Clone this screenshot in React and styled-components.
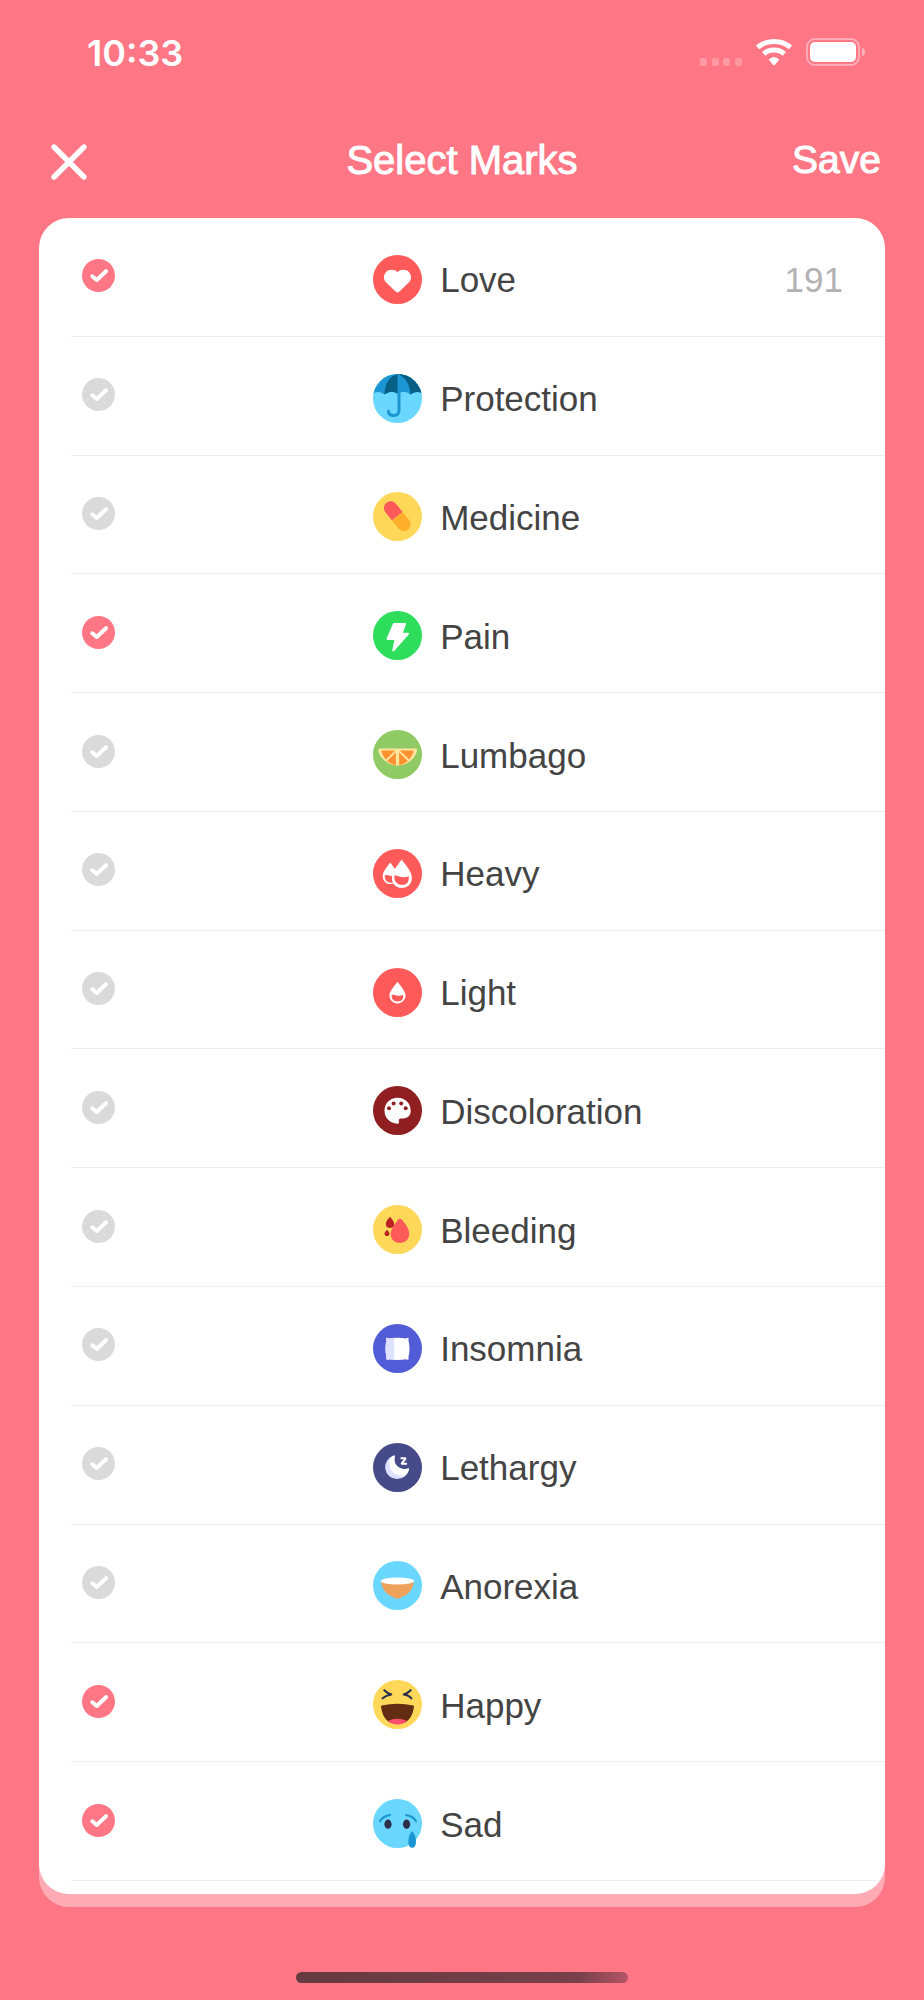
import React, { useState } from "react";
import styled, { createGlobalStyle, ThemeProvider } from "styled-components";

const theme = {
  pink: "#ff7685",
  pinkLight: "#ffabb5",
  white: "#ffffff",
  off: "#dadada",
  line: "#ededee",
  text: "#444444",
  muted: "#b2b2b2"
};

const GlobalStyle = createGlobalStyle`
  * {
    box-sizing: border-box;
  }

  body {
    margin: 0;
    background: ${theme.pink};
    font-family: "Liberation Sans", Arial, sans-serif;
  }
`;

const Screen = styled.div`
  min-height: 100vh;
  display: flex;
  flex-direction: column;
  background: ${({ theme }) => theme.pink};
  color: ${({ theme }) => theme.white};
`;

const StatusBar = styled.div`
  height: 106px;
  padding: 0 59px 0 87px;
  display: flex;
  justify-content: space-between;
  align-items: center;
`;

const Time = styled.time`
  font-family: Inter, "Liberation Sans", sans-serif;
  font-size: 36px;
  font-weight: 600;
  line-height: 44px;
`;

const StatusIcons = styled.div`
  display: flex;
  align-items: center;
`;

const Header = styled.header`
  height: 112px;
  padding: 0 43px 4px;
  display: grid;
  grid-template-columns: 1fr auto 1fr;
  align-items: center;
`;

const Title = styled.h1`
  margin: 0;
  font-size: 40px;
  font-weight: 400;
  line-height: 48px;
  -webkit-text-stroke: 1px currentColor;
`;

const HeaderButton = styled.button`
  justify-self: ${({ $end }) => ($end ? "end" : "start")};
  display: flex;
  padding: ${({ $end }) => ($end ? "0" : "4px 7px 0")};
  border: 0;
  background: none;
  color: inherit;
  font: inherit;
  font-size: 39px;
  line-height: 48px;
  -webkit-text-stroke: 1px currentColor;
  cursor: pointer;
`;

const Card = styled.main`
  flex: 1;
  margin: 0 39px 106px;
  padding: 0 0 13px 32px;
  display: flex;
  overflow: hidden;
  border-radius: 30px;
  background: ${({ theme }) => theme.white};
  box-shadow: 0 13px 0 ${({ theme }) => theme.pinkLight};
`;

const List = styled.ul`
  flex: 1;
  margin: 0;
  padding: 0;
  display: flex;
  flex-direction: column;
  list-style: none;
`;

const Item = styled.li`
  flex: 1 0 80px;
  display: flex;
  border-bottom: 1px solid ${({ theme }) => theme.line};
`;

const Row = styled.label`
  flex: 1;
  padding: 5px 42px 0 11px;
  display: grid;
  grid-template-columns: minmax(60px, 38%) auto 1fr auto;
  align-items: center;
  color: ${({ theme }) => theme.text};
  font-size: 35px;
  line-height: 44px;
  cursor: pointer;
`;

const Check = styled.span`
  width: 33px;
  height: 33px;
  margin-bottom: 7px;
  display: grid;

  > * {
    grid-area: 1 / 1;
  }

  svg {
    pointer-events: none;
  }
`;

const CheckInput = styled.input`
  appearance: none;
  width: 33px;
  height: 33px;
  margin: 0;
  border-radius: 50%;
  background: ${({ theme }) => theme.off};
  cursor: pointer;

  &:checked {
    background: ${({ theme }) => theme.pink};
  }
`;

const Mark = styled.svg`
  display: block;
  width: 49px;
  height: 49px;
  margin-left: 2px;
`;

const Label = styled.span`
  padding: 2px 0 0 18px;
`;

const Count = styled.span`
  padding-top: 2px;
  color: ${({ theme }) => theme.muted};
`;

const HomeBar = styled.div`
  width: 36%;
  height: 11px;
  margin: -28px auto 17px;
  border-radius: 6px;
  background: linear-gradient(100deg, #653a41 0%, #77404a 85%, #b65665 100%);
`;

/* every mark is drawn on a 49 x 49 circle */
const marks = [
  {
    id: "love",
    label: "Love",
    count: 191,
    checked: true,
    bg: "#ff5a5a",
    art: (
      <path
        fill="#fff"
        d="M24.5 17.2C21.5 14 15.8 14.2 12.9 17.2C10.2 20.3 10.3 24.6 13 27.2L22.6 36.6C23.8 37.8 25.2 37.8 26.4 36.6L36 27.2C38.7 24.6 38.8 20.3 36.1 17.2C33.2 14.2 27.5 14 24.5 17.2Z"
      />
    )
  },
  {
    id: "protection",
    label: "Protection",
    bg: "#69d7ff",
    art: (
      <>
        <path
          fill="#1c96d2"
          d="M0 20Q2 0 24.5 0Q47 0 49 20L48 19Q43 16.5 37.5 20.5Q31 15.5 24.5 20Q18 15.5 11.5 20.5Q6 16.5 1 19Z"
        />
        <path
          fill="#075f86"
          d="M24.5 0Q12 4 11.5 20.5Q18 15.5 24.5 19.5ZM24.5 0Q36 4 37.5 20.5Q43 16.5 49 19V0Z"
        />
        <path
          fill="none"
          stroke="#1c96d2"
          strokeWidth="3"
          strokeLinecap="round"
          d="M26 18V36.5Q26 41.5 20.7 41.5Q15.5 41.5 15.5 37"
        />
      </>
    )
  },
  {
    id: "medicine",
    label: "Medicine",
    bg: "#ffd85a",
    art: (
      <g transform="rotate(-39 24.3 24.2)">
        <path fill="#ff5a5a" d="M17.5 24.2V13.7A6.8 6.8 0 0 1 31.1 13.7V24.2Z" />
        <path fill="#ffaf2c" d="M17.5 24.2V34.7A6.8 6.8 0 0 0 31.1 34.7V24.2Z" />
      </g>
    )
  },
  {
    id: "pain",
    label: "Pain",
    checked: true,
    bg: "#2edd5b",
    art: (
      <path
        fill="#fff"
        d="M20.8 12H32.4Q33.3 12 33 12.9L30 21.7H35.3Q36.8 21.9 35.9 23.2L21.2 40Q19.3 41.2 19.3 39.2L21.3 29H14.4Q13.2 28.8 13.6 27.6L20 12.6Q20.2 12 20.8 12Z"
      />
    )
  },
  {
    id: "lumbago",
    label: "Lumbago",
    bg: "#8fca65",
    art: (
      <>
        <path fill="#ffe6a0" d="M6.3 18.6H43.2Q44.2 18.6 44.1 19.6A19.6 18 0 0 1 5.2 19.6Q5.2 18.6 6.3 18.6Z" />
        <path
          fill="#ff922e"
          d="M8.3 20.6H22.2L12.8 29.6Q9.3 26 8.3 20.6ZM40.7 20.6H26.8L36.2 29.6Q39.7 26 40.7 20.6ZM22.9 22.2V35.2Q18 34.4 14.2 31.1ZM26.1 22.2V35.2Q31 34.4 34.8 31.1Z"
        />
      </>
    )
  },
  {
    id: "heavy",
    label: "Heavy",
    bg: "#ff5a5a",
    art: (
      <>
        <path
          fill="#fff"
          d="M17.2 13.4C15 16.3 9.7 22.5 9.7 27.2C9.7 31.5 13 35 17.2 35C21.4 35 24.7 31.5 24.7 27.2C24.7 22.5 19.4 16.3 17.2 13.4Z"
        />
        <path fill="#ff5a5a" d="M11.6 26.6C14.5 24.8 17 27.8 20.4 26.6Q20 31 21.4 33.3Q12 35.4 11.6 26.6Z" />
        <path
          fill="#fff"
          d="M28.6 10.6C25.6 14.8 18.9 22.5 18.9 28.8C18.9 34.8 23 39.1 28.8 39.1C34.6 39.1 38.9 34.8 38.9 28.8C38.9 22.5 31.6 14.8 28.6 10.6Z"
        />
        <path fill="#ff5a5a" d="M21.2 26.6C25.5 25.7 28.5 30.5 35.8 26.9Q36.6 35.8 28.8 36Q21 35.8 21.2 26.6Z" />
      </>
    )
  },
  {
    id: "light",
    label: "Light",
    bg: "#ff5a5a",
    art: (
      <>
        <path
          fill="#fff"
          d="M24.5 13.7C22 17.2 16.4 23.2 16.4 27.6C16.4 32 20 35.5 24.5 35.5C29 35.5 32.6 32 32.6 27.6C32.6 23.2 27 17.2 24.5 13.7Z"
        />
        <path fill="#ff5a5a" d="M18.5 27C22 25.6 24.5 29.5 30.3 26.7Q30.8 33.3 24.5 33.4Q18.5 33.2 18.5 27Z" />
      </>
    )
  },
  {
    id: "discoloration",
    label: "Discoloration",
    bg: "#8f1f20",
    art: (
      <>
        <path
          fill="#fff"
          d="M24.6 11.8C17 11.8 11.5 17.3 11.5 24.6C11.5 32 17 37.7 24.7 37.7Q26 37.7 25.9 36.5L25.8 34Q26 32.4 27.8 32.5C33 33 37.7 31 37.7 24.8C37.7 17.3 32.2 11.8 24.6 11.8Z"
        />
        <g fill="#8f1f20">
          <circle cx="16" cy="22.2" r="2" />
          <circle cx="20.6" cy="17.6" r="2" />
          <circle cx="28.2" cy="17.6" r="2" />
          <circle cx="32.7" cy="22.2" r="2" />
        </g>
      </>
    )
  },
  {
    id: "bleeding",
    label: "Bleeding",
    bg: "#ffd85a",
    art: (
      <>
        <path
          fill="#ff5a5a"
          d="M27.2 13.8Q25.8 13.4 24.4 15.4C21.4 19.3 17.7 24.7 17.7 29C17.7 34.2 21.6 38 26.9 38C32.3 38 36.2 34.2 36.2 29C36.2 24.2 32.7 19.3 29.7 15.6Q28.4 13.9 27.2 13.8Z"
        />
        <path
          fill="#b92222"
          d="M17 11.7C15 14 12.8 16.5 12.8 19C12.8 21.4 14.6 23.1 17 23.1C19.4 23.1 21.2 21.4 21.2 19C21.2 16.5 19 14 17 11.7ZM14 24.8C12.8 26.1 11.5 27.4 11.5 28.7C11.5 30.1 12.6 31 14 31C15.4 31 16.5 30.1 16.5 28.7C16.5 27.4 15.2 26.1 14 24.8Z"
        />
      </>
    )
  },
  {
    id: "insomnia",
    label: "Insomnia",
    bg: "#525cd6",
    art: (
      <>
        <path
          fill="#fff"
          d="M13.6 13.8Q14.8 13.4 15.8 14.4Q24.5 13.2 33.3 14.4Q34.4 13.4 35.4 13.8Q36 14.8 35.4 16Q37.6 24.5 35.4 33.3Q36 34.8 35.4 35.6Q34.4 36 33.3 35.2Q24.5 36.6 15.8 35.2Q14.8 36 13.6 35.6Q13 34.8 13.4 33.3Q11.6 24.5 13.4 16Q13 14.8 13.6 13.8Z"
        />
        <path
          fill="#dde1ff"
          d="M13.6 13.8Q14.8 13.4 15.8 14.4L21.2 13.8V35.8L15.8 35.2Q14.8 36 13.6 35.6Q13 34.8 13.4 33.3Q11.6 24.5 13.4 16Q13 14.8 13.6 13.8Z"
        />
      </>
    )
  },
  {
    id: "lethargy",
    label: "Lethargy",
    bg: "#454a88",
    art: (
      <>
        <path
          fill="#dde1ff"
          d="M20.7 12.6A12 12 0 1 0 36 25.8Q35.8 25 34.8 25.5C27 28 19.5 21.5 21.8 13.5Q21.8 12.4 20.7 12.6Z"
        />
        <path
          fill="#fff"
          d="M20.7 12.6C16 14.5 15.3 20.6 17.3 25C19.8 31.3 26 34 32.4 32.2Q36 29.3 36 25.8Q35.8 25 34.8 25.5C27 28 19.5 21.5 21.8 13.5Q21.8 12.4 20.7 12.6Z"
        />
        <path
          fill="none"
          stroke="#fff"
          strokeWidth="2"
          strokeLinejoin="bevel"
          d="M27.6 15.3H32.8L28.4 20.8H34"
        />
      </>
    )
  },
  {
    id: "anorexia",
    label: "Anorexia",
    bg: "#69d7ff",
    art: (
      <>
        <path fill="#efa15a" d="M8 20.5C9 28.5 13.5 33.5 19.5 35.6Q24.5 40 29.5 35.6C35.5 33.5 40 28.5 41 20.5Z" />
        <ellipse cx="24.5" cy="20" rx="16.6" ry="3.6" fill="#fff" />
      </>
    )
  },
  {
    id: "happy",
    label: "Happy",
    checked: true,
    bg: "#ffd85a",
    art: (
      <>
        <g fill="none" stroke="#25304f" strokeWidth="2.1" strokeLinecap="round" strokeLinejoin="round">
          <path d="M11.3 10.2Q14 13 18.3 14.5Q13 15.2 9.6 18.3" />
          <path d="M37.7 10.2Q35 13 30.7 14.5Q36 15.2 38.4 18.3" />
        </g>
        <path fill="#622d13" d="M8.8 25.5Q24.5 22 40.4 25.5Q41.2 25.8 41 26.8C39.7 37.5 34 44.2 24.5 44.2C15 44.2 9.3 37.5 8 26.8Q7.9 25.7 8.8 25.5Z" />
        <path fill="#ff4f6e" d="M14.8 41Q24.5 36.5 34.2 41Q30.5 44.4 24.5 44.4Q18.5 44.4 14.8 41Z" />
      </>
    )
  },
  {
    id: "sad",
    label: "Sad",
    checked: true,
    bg: "#69d7ff",
    over: <path fill="#1c96d2" d="M38.9 32.3C36.6 34.3 35.3 38.5 35.3 43Q35.4 48.7 39.2 48.8Q42.9 48.7 43 43C43 38.5 41.3 34.2 38.9 32.3Z" />,
    art: (
      <>
        <g fill="none" stroke="#1c96d2" strokeWidth="2.2" strokeLinecap="round">
          <path d="M7 22.2Q10.3 16.8 17 16.2" />
          <path d="M43 22.2Q39.7 16.8 33.2 16.2" />
        </g>
        <ellipse cx="15" cy="25.2" rx="3.6" ry="4.6" fill="#2c2e4a" />
        <ellipse cx="33.6" cy="25.2" rx="3.6" ry="4.6" fill="#2c2e4a" />
      </>
    )
  }
];

const MarkIcon = ({ id, bg, art, over }) => (
  <Mark viewBox="0 0 49 49" aria-hidden="true">
    <clipPath id={`clip-${id}`}>
      <circle cx="24.5" cy="24.5" r="24.5" />
    </clipPath>
    <g clipPath={`url(#clip-${id})`}>
      <rect width="49" height="49" fill={bg} />
      {art}
    </g>
    {over}
  </Mark>
);

const Status = () => (
  <StatusBar>
    <Time>10:33</Time>
    <StatusIcons>
      <svg width="165" height="30" viewBox="0 0 165 30" aria-hidden="true">
        <g fill="#fff" fillOpacity="0.25">
          <rect x="0" y="20" width="7" height="8" rx="2" />
          <rect x="12" y="20" width="7" height="8" rx="2" />
          <rect x="23" y="20" width="7" height="8" rx="2" />
          <rect x="35" y="20" width="7" height="8" rx="2" />
        </g>
        <g fill="none" stroke="#fff" strokeWidth="5">
          <path d="M57.5 9.4Q64.5 3.5 74 3.5Q83.5 3.5 90.5 9.4" />
          <path d="M63.7 15.9Q68 12.1 74 12.1Q80 12.1 84.3 15.9" />
        </g>
        <path fill="#fff" d="M68.6 21.4Q74 16.4 79.4 21.4L74.8 27Q74 27.8 73.2 27Z" />
        <rect x="107" y="1" width="52" height="26" rx="8" fill="none" stroke="#fff" strokeOpacity="0.4" strokeWidth="2" />
        <rect x="110" y="4" width="46" height="20" rx="5" fill="#fff" />
        <path fill="#fff" fillOpacity="0.45" d="M162 9.5Q165 11 165 14Q165 17 162 18.5Z" />
      </svg>
    </StatusIcons>
  </StatusBar>
);

const App = () => {
  const [selected, setSelected] = useState(() =>
    marks.filter(({ checked }) => checked).map(({ id }) => id)
  );

  const toggleMark = id =>
    setSelected(current =>
      current.includes(id) ? current.filter(x => x !== id) : [...current, id]
    );

  return (
    <ThemeProvider theme={theme}>
      <GlobalStyle />
      <Screen>
        <Status />
        <Header>
          <HeaderButton type="button" aria-label="Close">
            <svg width="38" height="38" viewBox="0 0 38 38" aria-hidden="true">
              <path
                fill="none"
                stroke="currentColor"
                strokeWidth="5.4"
                strokeLinecap="round"
                d="M4 4L34 34M34 4L4 34"
              />
            </svg>
          </HeaderButton>
          <Title>Select Marks</Title>
          <HeaderButton type="button" $end>
            Save
          </HeaderButton>
        </Header>
        <Card>
          <List>
            {marks.map(mark => (
              <Item key={mark.id}>
                <Row>
                  <Check>
                    <CheckInput
                      type="checkbox"
                      checked={selected.includes(mark.id)}
                      onChange={() => toggleMark(mark.id)}
                    />
                    <svg width="33" height="33" viewBox="0 0 33 33" aria-hidden="true">
                      <path
                        fill="none"
                        stroke="#fff"
                        strokeWidth="4"
                        strokeLinecap="round"
                        strokeLinejoin="round"
                        d="M10.3 17.3L14.7 21L24 12.2"
                      />
                    </svg>
                  </Check>
                  <MarkIcon {...mark} />
                  <Label>{mark.label}</Label>
                  {mark.count && <Count>{mark.count}</Count>}
                </Row>
              </Item>
            ))}
          </List>
        </Card>
        <HomeBar />
      </Screen>
    </ThemeProvider>
  );
};

export default App;
